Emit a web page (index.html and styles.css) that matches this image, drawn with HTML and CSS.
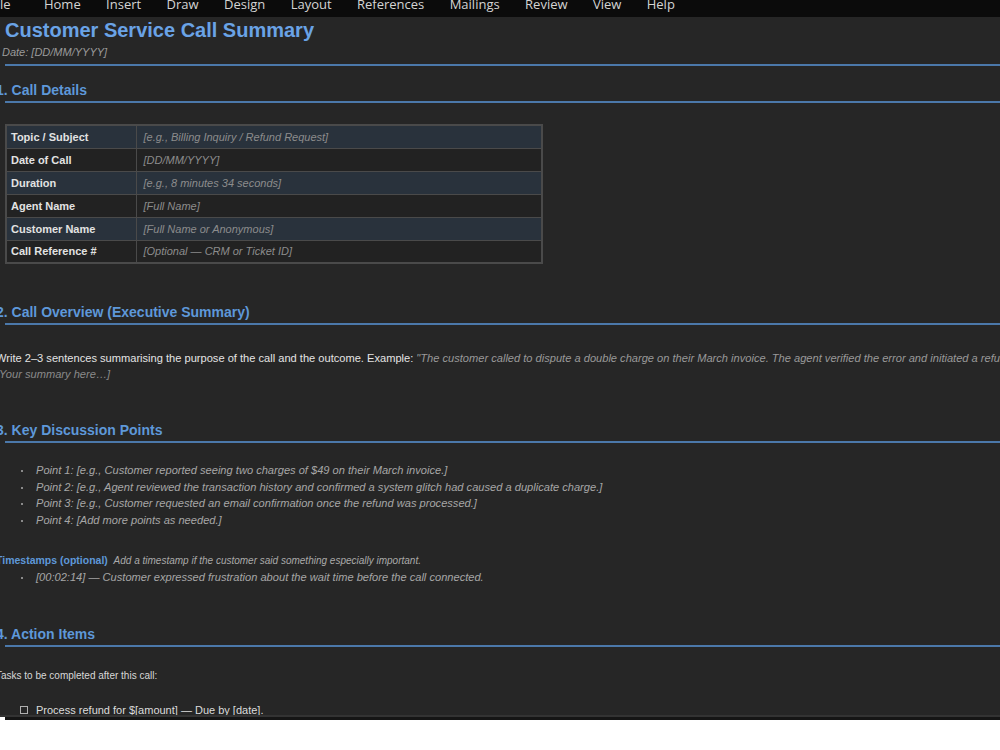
FILE: index.html
```html
<!DOCTYPE html>
<html lang="en">
<head>
  <meta charset="UTF-8" />
  <meta name="viewport" content="width=device-width, initial-scale=1.0" />
  <title>Customer Service Call Summary</title>
  <link rel="stylesheet" href="styles.css">
</head>
<body>
  <div class="menubar">
    <nav class="menu">
      <span class="file">File</span>
      <span>Home</span>
      <span>Insert</span>
      <span>Draw</span>
      <span>Design</span>
      <span>Layout</span>
      <span>References</span>
      <span>Mailings</span>
      <span>Review</span>
      <span>View</span>
      <span>Help</span>
    </nav>
  </div>

  <main class="doc">
    <div class="page">
      <h1 class="title">Customer Service Call Summary</h1>
      <p class="date">Date: [DD/MM/YYYY]</p>
      <hr class="rule">

      <h2 class="section first">1. Call Details</h2>
      <hr class="rule">
      <table class="details">
        <tr><th>Topic / Subject</th><td>[e.g., Billing Inquiry / Refund Request]</td></tr>
        <tr><th>Date of Call</th><td>[DD/MM/YYYY]</td></tr>
        <tr><th>Duration</th><td>[e.g., 8 minutes 34 seconds]</td></tr>
        <tr><th>Agent Name</th><td>[Full Name]</td></tr>
        <tr><th>Customer Name</th><td>[Full Name or Anonymous]</td></tr>
        <tr><th>Call Reference #</th><td>[Optional — CRM or Ticket ID]</td></tr>
      </table>

      <h2 class="section">2. Call Overview (Executive Summary)</h2>
      <hr class="rule">
      <p class="text overview">Write 2–3 sentences summarising the purpose of the call and the outcome. Example: <em class="quote">"The customer called to dispute a double charge on their March invoice. The agent verified the error and initiated a refund within 5–7 business days."</em></p>
      <p class="text placeholder">[Your summary here…]</p>

      <h2 class="section">3. Key Discussion Points</h2>
      <hr class="rule">
      <ul class="points">
        <li>Point 1: [e.g., Customer reported seeing two charges of $49 on their March invoice.]</li>
        <li>Point 2: [e.g., Agent reviewed the transaction history and confirmed a system glitch had caused a duplicate charge.]</li>
        <li>Point 3: [e.g., Customer requested an email confirmation once the refund was processed.]</li>
        <li>Point 4: [Add more points as needed.]</li>
      </ul>

      <p class="stamps"><strong>Timestamps (optional)</strong> <em>Add a timestamp if the customer said something especially important.</em></p>
      <ul class="points stamp-list">
        <li>[00:02:14] — Customer expressed frustration about the wait time before the call connected.</li>
      </ul>

      <h2 class="section">4. Action Items</h2>
      <hr class="rule">
      <p class="tasks">Tasks to be completed after this call:</p>
      <p class="todo"><span class="check"></span>Process refund for $[amount] — Due by [date].</p>
    </div>
  </main>
  <div class="doc-foot"></div>
</body>
</html>
```

FILE: styles.css
```css
* {
  box-sizing: border-box;
}
body {
  margin: 0;
  background: #fff;
  font-family: "Liberation Sans", Arial, sans-serif;
}
.menubar {
  height: 17px;
  background: #0b0b0b;
  overflow: hidden;
}
.menu {
  display: flex;
  gap: 25.4px;
  margin: -6px 0 0 -10px;
  font-family: "Open Sans", sans-serif;
  font-size: 13px;
  line-height: 20px;
  color: #d4d4d4;
}
.menu .file {
  margin-right: 8px;
}
.doc {
  height: 700px;
  background: #262626;
  border-bottom: 2px solid #333;
  overflow: hidden;
}
.doc-foot {
  height: 3px;
  margin-left: 5px;
  background: #151515;
}
.page {
  margin-left: -4px;
}
.title {
  margin: 1px 0 0 9px;
  font-size: 20px;
  line-height: 24px;
  color: #6aa3e6;
}
.date {
  margin: 3px 0 0 6px;
  font-size: 11px;
  line-height: 14px;
  font-style: italic;
  color: #9a9a9a;
}
.rule {
  height: 2px;
  margin: 5px 0 0 9px;
  border: 0;
  background: #4b78aa;
}
.section {
  margin: 39px 0 0;
  font-size: 14px;
  line-height: 18px;
  color: #5e98d9;
}
.section.first {
  margin-top: 15px;
}
.section + .rule {
  margin-top: 2px;
}
.details {
  width: 538px;
  margin: 21px 0 0 9px;
  border-collapse: collapse;
  border: 2px solid #4a4a4a;
  font-size: 11px;
}
.details th, .details td {
  height: 23px;
  border: 1px solid #4a4a4a;
}
.details th {
  width: 130px;
  padding: 0 4px;
  text-align: left;
  color: #e2e2e2;
}
.details td {
  padding: 0 7px;
  font-style: italic;
  color: #8c8c8c;
}
.details tr:nth-child(odd) {
  background: #29323c;
}
.details tr:nth-child(even) {
  background: #222;
}
.text {
  margin: 0;
  font-size: 11.1px;
  line-height: 16px;
  color: #e4e4e4;
  white-space: nowrap;
}
.overview {
  margin-top: 25px;
}
.quote {
  color: #999;
}
.placeholder {
  font-style: italic;
  color: #8a8a8a;
}
.points {
  margin: 19px 0 0;
  padding-left: 25px;
  list-style: none;
  font-size: 11.1px;
  line-height: 16.5px;
  font-style: italic;
  color: #a6a6a6;
}
.points li::before {
  content: "";
  display: inline-block;
  width: 2px;
  height: 2px;
  margin-right: 13px;
  vertical-align: middle;
  background: #8a8a8a;
}
.stamps {
  margin: 25px 0 0;
  font-size: 10px;
  line-height: 14px;
  color: #aaa;
}
.stamps strong {
  font-size: 10.5px;
  color: #5e98d9;
  margin-right: 3px;
}
.stamp-list {
  margin-top: 1px;
}
.tasks {
  margin: 21px 0 0;
  font-size: 10px;
  line-height: 16px;
  color: #d8d8d8;
}
.todo {
  margin: 18px 0 0;
  padding-left: 24px;
  font-size: 11px;
  line-height: 16px;
  color: #dcdcdc;
}
.check {
  display: inline-block;
  width: 8px;
  height: 8px;
  margin-right: 8px;
  border: 1px solid #b0b0b0;
}
```
